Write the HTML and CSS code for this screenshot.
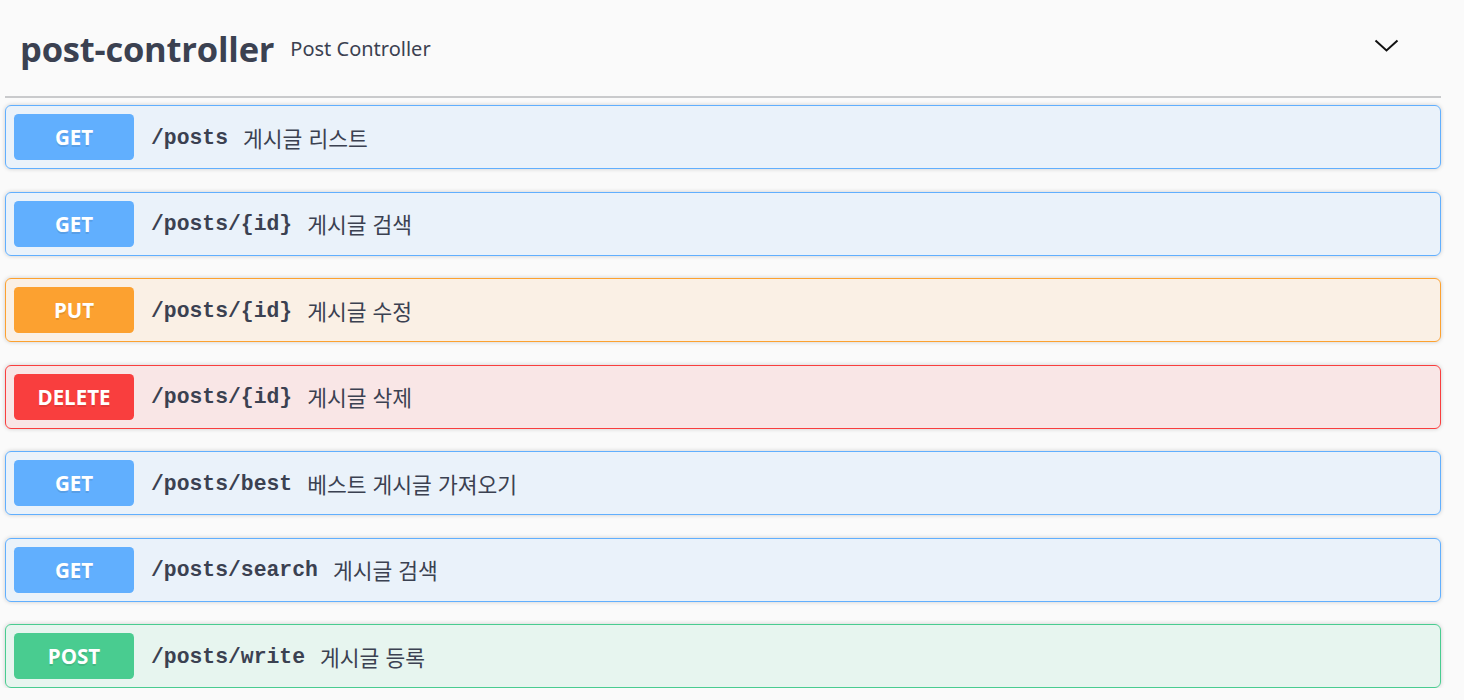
FILE: index.html
```html
<!DOCTYPE html>
<html lang="ko">
<head>
<meta charset="utf-8">
<title>post-controller</title>
<link rel="stylesheet" href="styles.css">
</head>
<body>
<div class="section">
  <div class="tag">
    <h3 class="tag-title">post-controller</h3>
    <span class="tag-desc">Post Controller</span>
    <span class="tag-arrow">
      <svg width="30" height="30" viewBox="0 0 30 30"><path d="M3.5 9.5 L14.5 19.5 L25.5 9.5" fill="none" stroke="#111" stroke-width="2"/></svg>
    </span>
  </div>
  <div class="ops">
    <div class="op get"><span class="method">GET</span><span class="path">/posts</span><span class="desc">게시글 리스트</span></div>
    <div class="op get"><span class="method">GET</span><span class="path">/posts/{id}</span><span class="desc">게시글 검색</span></div>
    <div class="op put"><span class="method">PUT</span><span class="path">/posts/{id}</span><span class="desc">게시글 수정</span></div>
    <div class="op delete"><span class="method">DELETE</span><span class="path">/posts/{id}</span><span class="desc">게시글 삭제</span></div>
    <div class="op get"><span class="method">GET</span><span class="path">/posts/best</span><span class="desc">베스트 게시글 가져오기</span></div>
    <div class="op get"><span class="method">GET</span><span class="path">/posts/search</span><span class="desc">게시글 검색</span></div>
    <div class="op post"><span class="method">POST</span><span class="path">/posts/write</span><span class="desc">게시글 등록</span></div>
  </div>
</div>
</body>
</html>
```
FILE: styles.css
```css
html, body {
  margin: 0;
  padding: 0;
  background: #fafafa;
}
body {
  font-family: "Open Sans", "Noto Sans CJK KR", sans-serif;
  color: #3b4151;
  overflow: hidden;
}
.section {
  padding: 0 23px 0 5px;
}
.tag {
  display: flex;
  align-items: center;
  height: 98px;
  box-sizing: border-box;
  padding: 0 0 0 15px;
  border-bottom: 2px solid #c9cacc;
  margin-bottom: 7px;
}
.tag-title {
  margin: 0;
  font-family: "Open Sans", sans-serif;
  font-size: 34.5px;
  font-weight: 700;
  color: #3b4151;
  letter-spacing: -0.2px;
  line-height: 1;
  padding-top: 2px;
}
.tag-desc {
  flex: 1;
  padding-left: 16px;
  font-family: "Noto Sans", "Noto Sans CJK KR", sans-serif;
  font-size: 20px;
  color: #3b4151;
}
.tag-arrow {
  display: flex;
  margin-right: 39px;
  margin-top: -4px;
}
.ops {
  display: flex;
  flex-direction: column;
  gap: 22.5px;
}
.op {
  display: flex;
  align-items: center;
  height: 64px;
  box-sizing: border-box;
  padding: 0 8px;
  border: 1px solid;
  border-radius: 6px;
  box-shadow: 0 0 4px rgba(0, 0, 0, 0.19);
}
.method {
  width: 120px;
  height: 46px;
  display: flex;
  align-items: center;
  justify-content: center;
  border-radius: 4.5px;
  color: #fff;
  font-family: "Open Sans", sans-serif;
  font-weight: 700;
  font-size: 20.5px;
  text-shadow: 0 1.5px 0 rgba(0, 0, 0, 0.1);
  flex-shrink: 0;
}
.path {
  padding-left: 17px;
  font-family: "Liberation Mono", "DejaVu Sans Mono", monospace;
  font-weight: 700;
  font-size: 21.4px;
  color: #3b4151;
  padding-top: 1px;
}
.desc {
  padding-left: 15px;
  font-family: "Noto Sans CJK KR", sans-serif;
  font-size: 21.5px;
  color: #3b4151;
}
.get { background: rgba(97, 175, 254, 0.1); border-color: #61affe; }
.get .method { background: #61affe; }
.put { background: rgba(252, 161, 48, 0.1); border-color: #fca130; }
.put .method { background: #fca130; }
.delete { background: rgba(249, 62, 62, 0.1); border-color: #f93e3e; }
.delete .method { background: #f93e3e; }
.post { background: rgba(73, 204, 144, 0.1); border-color: #49cc90; }
.post .method { background: #49cc90; }
```
